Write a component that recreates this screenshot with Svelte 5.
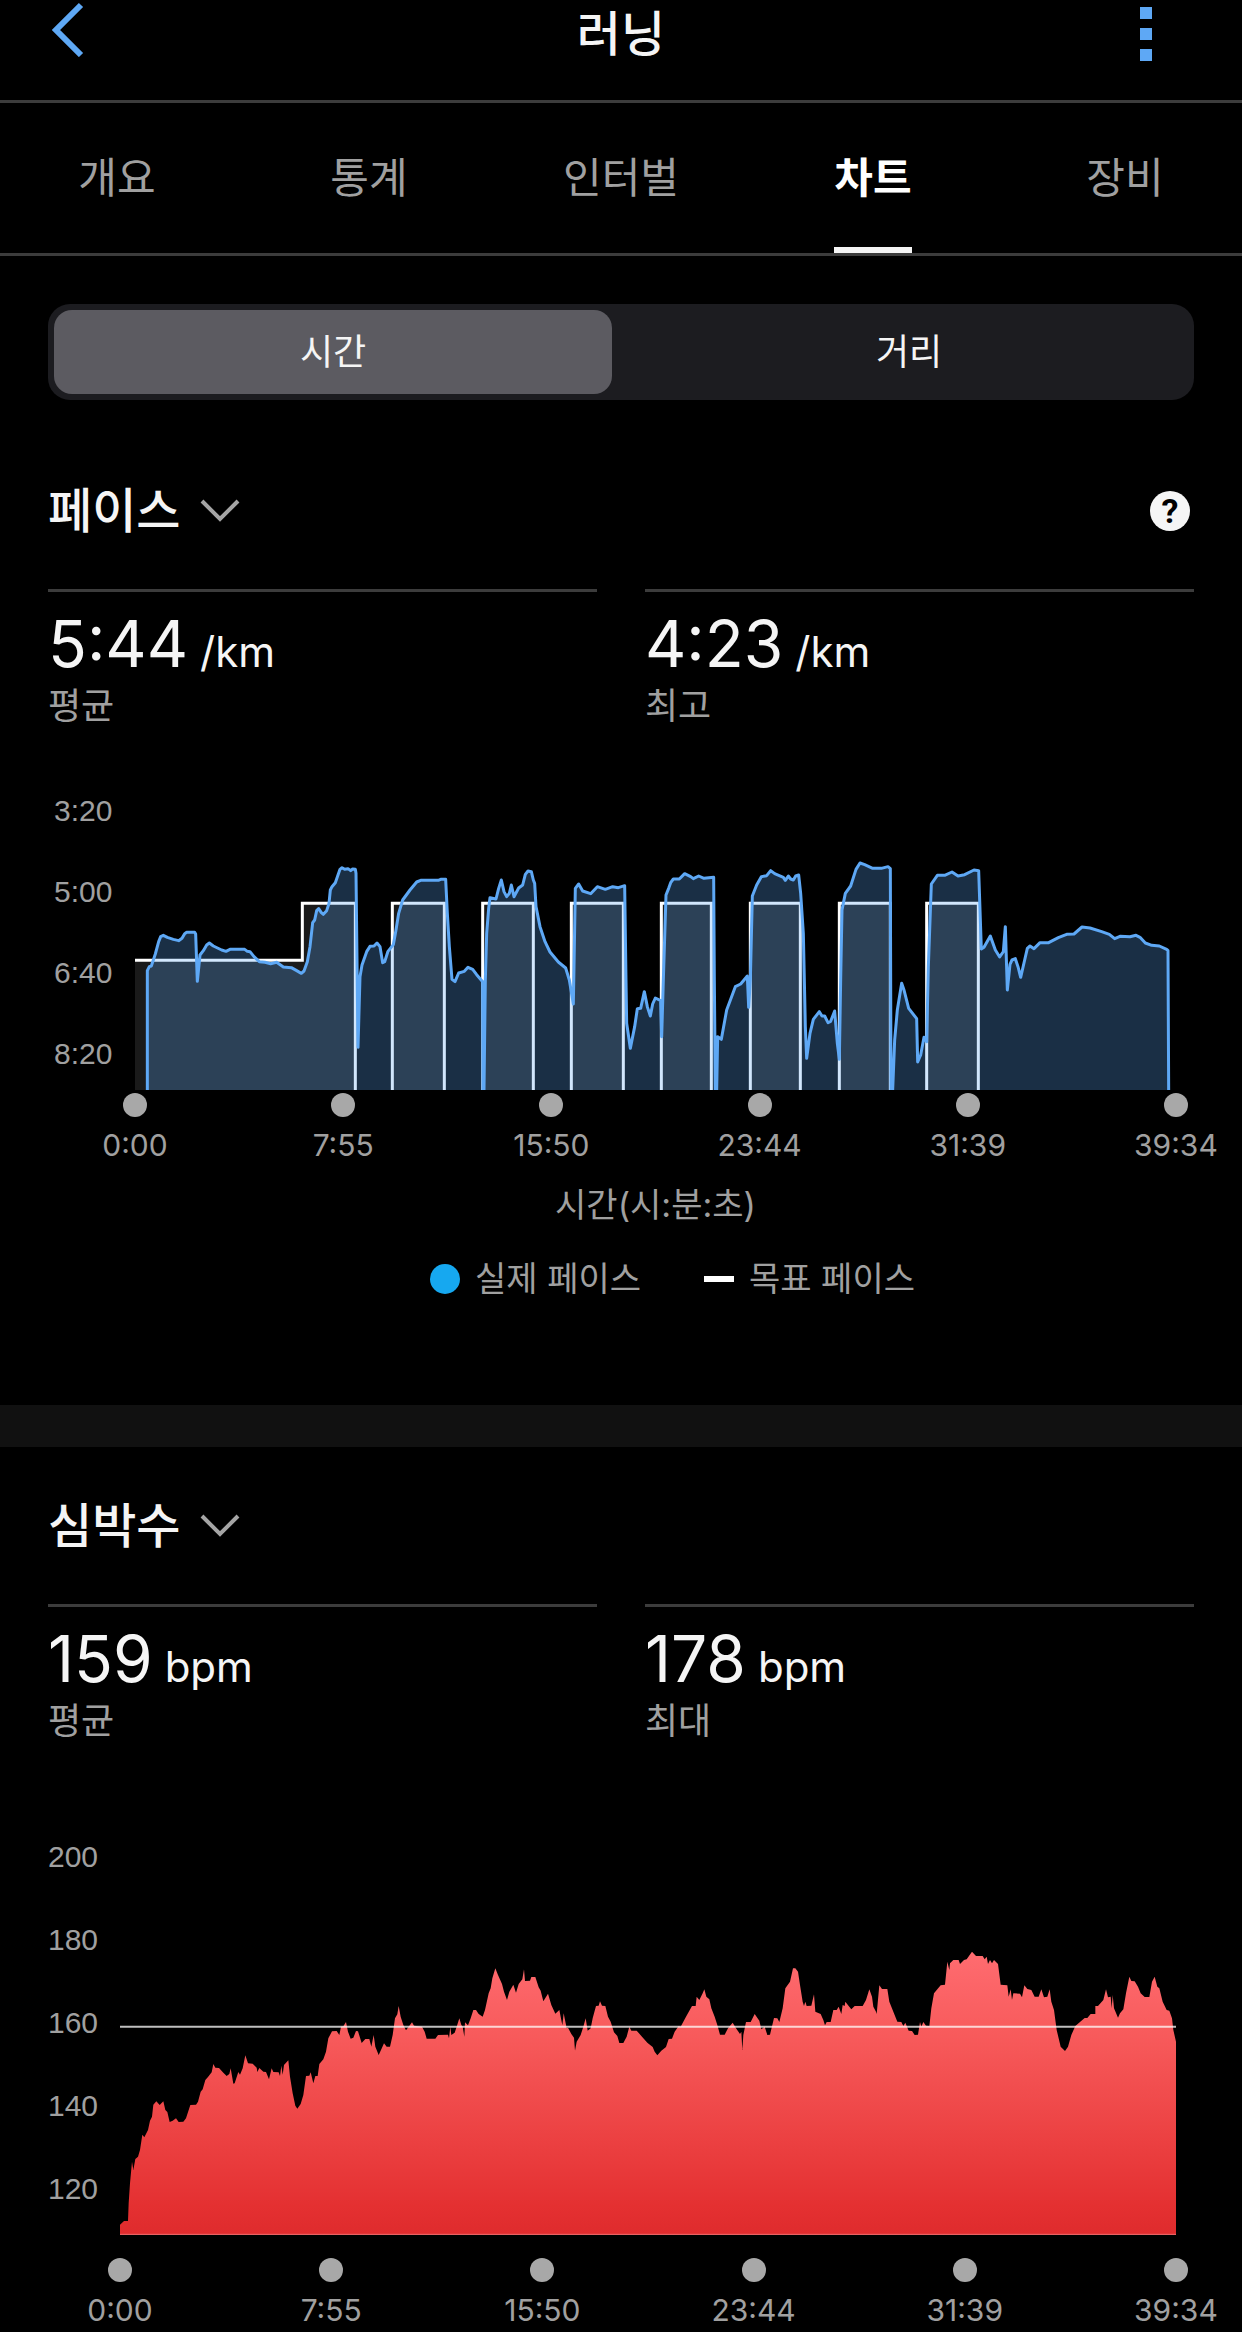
<script lang="ts">
	type Mode = 'time' | 'distance';

	const tabs = ['개요', '통계', '인터벌', '차트', '장비'];
	const times = ['0:00', '7:55', '15:50', '23:44', '31:39', '39:34'];
	const paceLabels = ['3:20', '5:00', '6:40', '8:20'];
	const heartLabels = ['200', '180', '160', '140', '120'];

	let activeTab = $state('차트');
	let mode = $state<Mode>('time');

	// Target pace blocks: left, right, top
	const targets = [
		[1087, 1243, 370],
		[1358, 1510, 370],
		[1624, 1780, 370],
		[1894, 2044, 370],
		[2161, 2311, 370],
		[2428, 2581, 370],
		[2690, 2845, 370]
	];

	const paceLine = `
		352,930 352,572 358,560 364,558 376,522 386,485 392,470 400,466 412,472 430,478 446,482 456,475
		464,461 470,457 494,457 497,462 502,604 510,525 520,512 530,495 538,489 550,498 575,510 588,514
		600,508 644,508 652,514 660,515 672,530 688,545 705,547 722,551 740,547 760,561 784,563 800,572
		814,580 822,573 832,545 840,500 848,428 854,420 860,392 866,386 874,398 880,403 890,392 897,370
		901,330 906,320 916,308 924,285 930,268 936,263 944,268 954,266 962,272 968,267 976,268 978,280
		984,802 990,590 996,555 1010,515 1020,499 1032,498 1041,489 1050,500 1058,548 1064,545 1074,514
		1090,494 1098,450 1106,400 1118,360 1140,330 1160,306 1172,301 1225,301 1232,298 1247,298
		1252,400 1258,500 1266,598 1275,605 1286,579 1303,574 1314,562 1328,568 1340,584 1358,605
		1359,930 1362,930 1366,600 1370,460 1376,385 1380,353 1398,357 1406,325 1414,300 1422,335
		1430,350 1438,340 1444,315 1452,350 1466,324 1478,315 1486,283 1494,273 1504,275 1510,300
		1514,310 1518,380 1530,440 1545,485 1560,516 1585,546 1607,564 1618,600 1630,672 1632,560
		1636,325 1646,312 1658,333 1682,341 1702,320 1726,328 1748,320 1765,323 1784,317 1788,600
		1790,730 1801,805 1814,740 1822,686 1832,685 1843,635 1852,680 1861,708 1868,672 1876,654
		1892,662 1895,770 1900,600 1908,345 1916,325 1922,308 1930,297 1948,297 1964,281 1982,290
		1990,296 2006,288 2022,295 2051,292 2053,600 2056,930 2060,930 2063,770 2074,778 2090,690
		2116,620 2132,612 2152,588 2156,682 2161,600 2167,348 2180,315 2194,290 2210,287 2222,272
		2234,281 2260,292 2266,301 2275,288 2282,297 2290,300 2297,288 2306,285 2312,340 2320,460
		2326,740 2330,835 2340,760 2350,718 2368,695 2376,708 2384,708 2394,728 2402,724 2414,693
		2422,790 2428,838 2432,600 2436,390 2446,340 2462,318 2478,268 2490,249 2504,254 2528,265
		2554,265 2574,260 2581,266 2583,930 2588,930 2594,780 2602,690 2615,610 2622,630 2636,685
		2660,716 2663,846 2672,825 2682,772 2690,785 2695,560 2704,312 2722,286 2744,286 2766,276
		2784,288 2804,284 2832,270 2846,272 2854,507 2862,502 2881,468 2896,510 2909,531 2920,515
		2926,440 2932,630 2940,553 2946,540 2956,536 2964,560 2972,592 2984,540 2992,505 3000,498
		3012,506 3030,488 3056,488 3085,473 3110,463 3132,462 3156,441 3180,444 3215,455 3238,463
		3254,476 3270,469 3300,470 3318,466 3330,472 3346,489 3365,496 3388,498 3410,508 3414,512
		3416,930`;

	const heartArea = `
		270,1005 270,974 282,963 294,963 296,910 300,850 306,785 310,810 316,777 324,770 330,750 337,704
		343,712 354,690 360,662 366,650 370,614 379,604 389,615 400,604 406,630 412,636 419,666 428,662
		438,655 446,666 460,665 468,655 481,615 498,614 504,605 512,575 518,568 526,540 534,531 545,517
		550,492 556,503 567,504 580,518 590,528 598,522 602,505 610,551 614,550 625,516 630,524 638,505
		646,466 654,490 668,491 680,503 682,516 688,504 700,515 708,516 717,538 725,505 730,516 746,517
		750,528 754,497 758,524 762,495 775,481 780,530 788,580 796,617 802,626 812,612 820,585 828,528
		838,527 842,517 850,550 856,528 863,528 868,492 880,478 888,455 895,415 906,394 920,393 928,405
		933,380 940,379 948,366 954,395 962,416 970,413 978,393 984,394 995,429 1006,417 1018,417
		1024,440 1031,405 1036,440 1046,465 1054,448 1062,430 1070,440 1080,440 1088,405 1095,355
		1102,343 1106,318 1112,350 1120,375 1128,391 1136,380 1146,367 1152,377 1176,380 1184,395
		1190,416 1216,416 1224,405 1254,404 1257,415 1261,380 1264,405 1274,398 1280,380 1288,355
		1294,375 1298,380 1303,410 1305,367 1314,376 1322,355 1330,330 1338,330 1346,342 1358,350
		1365,330 1376,280 1382,265 1387,235 1396,205 1404,225 1416,252 1422,275 1431,300 1438,275
		1450,254 1458,278 1466,252 1477,238 1482,208 1485,243 1500,242 1504,231 1516,231 1526,262
		1532,272 1540,304 1554,281 1564,315 1576,341 1588,330 1597,376 1601,340 1610,385 1614,383
		1624,402 1632,413 1635,452 1640,425 1652,405 1660,380 1667,355 1673,392 1682,385 1688,355
		1698,318 1706,317 1710,304 1716,317 1726,318 1734,350 1742,365 1752,397 1762,408 1768,429
		1780,429 1790,410 1798,380 1804,392 1820,392 1836,410 1852,428 1868,441 1874,455 1882,466
		1894,452 1908,441 1916,417 1926,416 1934,395 1946,378 1952,380 1968,350 1986,318 1997,318
		2000,290 2008,300 2018,280 2023,268 2029,290 2038,298 2044,325 2054,350 2062,375 2070,404
		2084,404 2094,385 2108,368 2118,385 2130,402 2134,395 2137,450 2140,405 2148,366 2162,366
		2174,342 2188,362 2194,388 2204,380 2212,405 2220,404 2232,354 2242,355 2248,366 2258,325
		2266,265 2280,245 2289,205 2296,205 2304,215 2310,255 2318,305 2322,318 2326,305 2330,318
		2344,317 2352,283 2356,335 2372,342 2380,360 2385,376 2390,366 2402,366 2410,330 2420,330
		2426,320 2434,342 2438,315 2444,318 2446,305 2456,318 2464,328 2474,318 2498,318 2508,300
		2518,268 2526,290 2530,320 2538,335 2540,342 2548,256 2556,267 2572,267 2578,305 2590,335
		2602,365 2614,366 2620,378 2626,368 2636,392 2646,393 2654,405 2664,404 2670,366 2674,380
		2680,366 2688,377 2698,378 2704,325 2712,280 2722,268 2732,256 2745,254 2752,185 2758,210
		2760,190 2770,180 2786,180 2790,192 2802,180 2810,178 2826,155 2838,168 2858,168 2864,178
		2870,170 2874,192 2880,180 2886,190 2892,180 2904,192 2912,254 2932,256 2936,290 2942,268
		2946,300 2950,280 2970,281 2976,292 2983,256 2992,267 3004,270 3014,290 3026,290 3034,268
		3042,292 3052,290 3059,268 3064,305 3072,330 3080,390 3092,440 3105,453 3114,440 3124,405
		3136,378 3150,366 3164,354 3172,354 3182,342 3196,342 3196,318 3204,318 3220,300 3228,268
		3234,292 3242,290 3245,325 3248,285 3252,325 3264,353 3270,340 3280,328 3288,280 3298,230
		3304,243 3314,244 3324,260 3332,280 3344,291 3358,291 3366,245 3374,230 3382,260 3388,265
		3398,305 3410,330 3418,332 3426,355 3430,390 3438,425 3438,1005`;
</script>

{#snippet title(name: string)}
	<button class="metric">
		<span>{name}</span>
		<svg class="chevron" viewBox="0 0 40 26" aria-hidden="true">
			<path d="M2 3 L20 21 L38 3" />
		</svg>
	</button>
{/snippet}

{#snippet stat(value: string, unit: string, label: string)}
	<div class="stat">
		<div class="value">
			<span>{value}</span>
			<span class="unit">{unit}</span>
		</div>
		<div class="label">{label}</div>
	</div>
{/snippet}

{#snippet timeAxis()}
	<div class="ticks">
		{#each times as time}
			<div class="tick">
				<span class="dot"></span>
				<span>{time}</span>
			</div>
		{/each}
	</div>
{/snippet}

<main>
	<header>
		<button class="icon-button" aria-label="뒤로">
			<svg class="back" viewBox="0 0 34 56" aria-hidden="true">
				<path d="M31 4 L6 29 L31 54" />
			</svg>
		</button>
		<h1>러닝</h1>
		<button class="icon-button more" aria-label="더 보기">
			<svg class="dots" viewBox="0 0 12 54" aria-hidden="true">
				<rect width="12" height="12" />
				<rect y="21" width="12" height="12" />
				<rect y="42" width="12" height="12" />
			</svg>
		</button>
	</header>

	<nav>
		{#each tabs as tab}
			<button class="tab" class:active={activeTab === tab} onclick={() => (activeTab = tab)}>
				<span>{tab}</span>
			</button>
		{/each}
	</nav>

	<div class="segments">
		<button class:selected={mode === 'time'} onclick={() => (mode = 'time')}>시간</button>
		<button class:selected={mode === 'distance'} onclick={() => (mode = 'distance')}>거리</button>
	</div>

	<section class="pace">
		<div class="heading">
			<h2>{@render title('페이스')}</h2>
			<button class="help" aria-label="도움말">?</button>
		</div>
		<div class="stats">
			{@render stat('5:44', '/km', '평균')}
			{@render stat('4:23', '/km', '최고')}
		</div>
		<div class="chart">
			<div class="y-axis">
				{#each paceLabels as label}
					<span>{label}</span>
				{/each}
			</div>
			<svg class="plot" viewBox="315 -30 3123 960" preserveAspectRatio="none" aria-hidden="true">
				<path class="target-fill" d="M315 541 H817 V370 H976 V930 H315 Z" />
				<path class="target-line" d="M315 541 H817 V370 H976 V930" />
				{#each targets as [left, right, top]}
					<path class="target-fill" d="M{left} 930 V{top} H{right} V930 Z" />
					<path class="target-line" d="M{left} 930 V{top} H{right} V930" />
				{/each}
				<polygon class="pace-fill" points={paceLine} />
				<polyline class="pace-line" points={paceLine} />
			</svg>
			<div class="x-axis">
				{@render timeAxis()}
				<div class="axis-title">시간(시:분:초)</div>
				<div class="legend">
					<span class="legend-item"><i class="actual"></i>실제 페이스</span>
					<span class="legend-item"><i class="target"></i>목표 페이스</span>
				</div>
			</div>
		</div>
	</section>

	<section class="heart">
		<div class="heading">
			<h2>{@render title('심박수')}</h2>
		</div>
		<div class="stats">
			{@render stat('159', 'bpm', '평균')}
			{@render stat('178', 'bpm', '최대')}
		</div>
		<div class="chart">
			<div class="y-axis">
				{#each heartLabels as label}
					<span>{label}</span>
				{/each}
			</div>
			<svg class="plot" viewBox="270 -255 3168 1260" preserveAspectRatio="none" aria-hidden="true">
				<defs>
					<linearGradient id="heartGradient" x1="0" y1="0" x2="0" y2="1">
						<stop offset="0" stop-color="#ff6c70" />
						<stop offset="0.3" stop-color="#f75a5b" />
						<stop offset="0.9" stop-color="#e43031" />
						<stop offset="1" stop-color="#df2b2d" />
					</linearGradient>
				</defs>
				<polygon points={heartArea} fill="url(#heartGradient)" />
				<path class="base-line" d="M270 1003 H3438" />
				<path class="average-line" d="M270 380 H3438" />
			</svg>
			<div class="x-axis">
				{@render timeAxis()}
			</div>
		</div>
	</section>
</main>

<style>
	:global(body) {
		background: #000;
	}
	main {
		min-height: 100vh;
		background: #000;
		color: #f5f5f5;
		font-family: Inter, 'Noto Sans CJK KR', sans-serif;
		overflow: hidden;
	}
	button {
		padding: 0;
		border: none;
		background: none;
		color: inherit;
		font: inherit;
		cursor: pointer;
	}
	svg {
		display: block;
	}
	header {
		display: grid;
		grid-template-columns: 120px 1fr 120px;
		align-items: start;
		height: 100px;
		border-bottom: 3px solid #3c3c3c;
	}
	h1,
	h2 {
		margin: 0;
		font-size: 48px;
		font-weight: 500;
		line-height: 60px;
	}
	h1 {
		padding-top: 4px;
		text-align: center;
	}
	.icon-button {
		display: flex;
		padding: 1px 0 0 50px;
	}
	.more {
		justify-content: flex-end;
		padding: 7px 90px 0 0;
	}
	.back {
		width: 34px;
		height: 56px;
		fill: none;
		stroke: #5ea8f5;
		stroke-width: 6;
	}
	.dots {
		width: 12px;
		height: 54px;
		fill: #5ea8f5;
	}
	nav {
		display: grid;
		grid-template-columns: repeat(5, 1fr);
		gap: 18px;
		height: 150px;
		border-bottom: 3px solid #3c3c3c;
	}
	.tab {
		display: flex;
		justify-content: center;
		padding-top: 6px;
		color: #a0a0a0;
		font-size: 42px;
		line-height: 138px;
	}
	.tab span {
		border-bottom: 6px solid transparent;
	}
	.tab.active {
		color: #fff;
		font-weight: 700;
	}
	.tab.active span {
		border-color: #f5f5f5;
	}
	.segments {
		display: grid;
		grid-template-columns: 1fr 1fr;
		gap: 18px;
		margin: 48px 48px 32px;
		padding: 6px;
		border-radius: 22px;
		background: #1c1c20;
	}
	.segments button {
		border-radius: 18px;
		font-size: 36px;
		line-height: 84px;
	}
	.segments .selected {
		background: #5c5b61;
	}
	section {
		padding-top: 48px;
	}
	.pace {
		padding-bottom: 102px;
		border-bottom: 42px solid #111;
	}
	.heading {
		display: flex;
		justify-content: space-between;
		align-items: center;
		height: 62px;
		margin: 0 52px 47px 48px;
	}
	.metric {
		display: flex;
		align-items: center;
		gap: 20px;
	}
	.chevron {
		width: 40px;
		height: 26px;
		fill: none;
		stroke: #a5a5a5;
		stroke-width: 4;
	}
	.help {
		width: 40px;
		height: 40px;
		border-radius: 50%;
		background: #f5f5f5;
		color: #000;
		font-family: Roboto, sans-serif;
		font-size: 34px;
		font-weight: 700;
		line-height: 40px;
	}
	.stats {
		display: grid;
		grid-template-columns: 1fr 1fr;
		gap: 48px;
		margin: 0 48px;
	}
	.stat {
		padding-top: 16px;
		border-top: 3px solid #3c3c3c;
	}
	.value {
		display: flex;
		align-items: baseline;
		gap: 12px;
		font-size: 64px;
		line-height: 72px;
	}
	.unit {
		font-size: 42px;
		line-height: 48px;
	}
	.label {
		color: #a0a0a0;
		font-size: 36px;
		line-height: 52px;
	}
	.chart {
		display: grid;
		grid-template-columns: 87px 1fr;
		margin: 38px 66px 0 48px;
		color: #a0a0a0;
		font-size: 30px;
	}
	.heart .chart {
		grid-template-columns: 72px 1fr;
		margin-top: 68px;
	}
	.y-axis {
		display: flex;
		flex-direction: column;
		height: 320px;
		padding-left: 6px;
		font-family: 'Liberation Sans', Arial, sans-serif;
		line-height: 81px;
	}
	.heart .y-axis {
		height: 420px;
		padding-left: 0;
		line-height: 83px;
	}
	.plot {
		width: 100%;
		height: 320px;
	}
	.heart .plot {
		height: 420px;
	}
	.plot path,
	.plot polyline {
		vector-effect: non-scaling-stroke;
	}
	.target-fill {
		fill: #1a1a1a;
	}
	.target-line {
		fill: none;
		stroke: #fff;
		stroke-width: 3;
	}
	.pace-fill {
		fill: #5da8f8;
		fill-opacity: 0.28;
	}
	.pace-line {
		fill: none;
		stroke: #5ea8f5;
		stroke-width: 3;
		stroke-linejoin: round;
	}
	.average-line {
		stroke: #fff;
		stroke-opacity: 0.75;
		stroke-width: 2;
	}
	.base-line {
		stroke: #fff;
		stroke-opacity: 0.3;
		stroke-width: 1;
	}
	.x-axis {
		grid-column: 2;
	}
	.ticks {
		display: flex;
		justify-content: space-between;
		margin: 0 -45px;
		padding-top: 3px;
	}
	.heart .ticks {
		padding-top: 23px;
	}
	.tick {
		display: flex;
		flex-direction: column;
		align-items: center;
		gap: 10px;
		width: 90px;
		line-height: 36px;
	}
	.dot {
		width: 24px;
		height: 24px;
		border-radius: 50%;
		background: #a8a8a8;
	}
	.axis-title {
		margin-top: 18px;
		font-size: 34px;
		line-height: 48px;
		text-align: center;
	}
	.legend {
		display: flex;
		justify-content: center;
		gap: 63px;
		margin-top: 26px;
		padding-left: 34px;
		font-size: 34px;
		line-height: 48px;
	}
	.legend-item {
		display: flex;
		align-items: center;
		gap: 15px;
	}
	.actual {
		width: 30px;
		height: 30px;
		border-radius: 50%;
		background: #16a8f0;
	}
	.target {
		width: 30px;
		height: 6px;
		background: #fff;
	}
</style>
